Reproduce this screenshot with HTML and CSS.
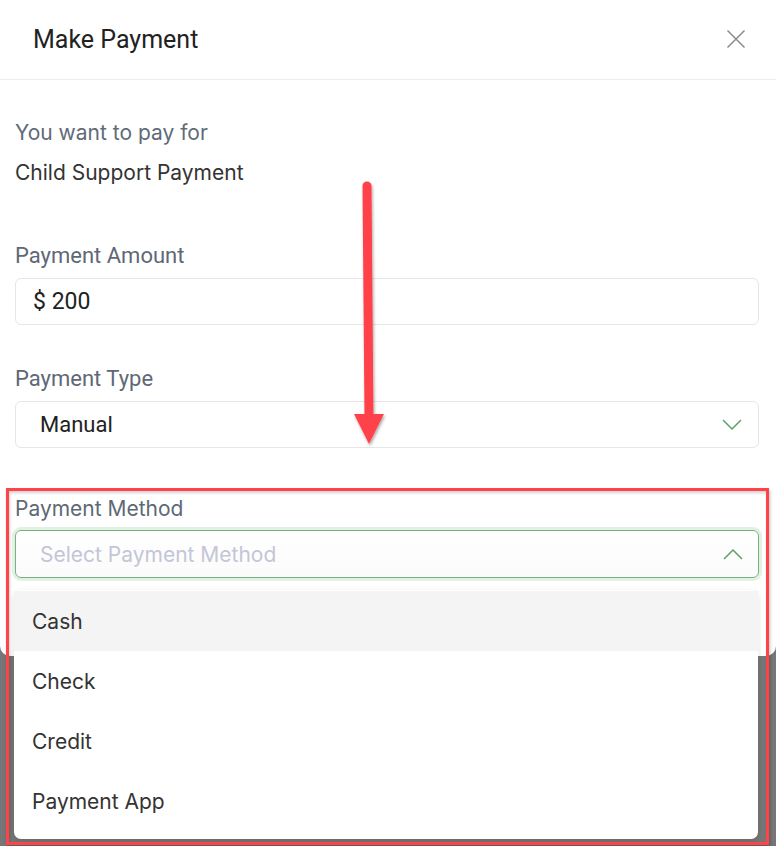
FILE: index.html
```html
<!DOCTYPE html>
<html>
<head>
<meta charset="utf-8">
<link rel="stylesheet" href="styles.css">
</head>
<body>
<div class="modal">
  <div class="modal-header">
    <h1 class="title">Make Payment</h1>
    <svg class="close" width="20" height="20" viewBox="0 0 20 20"><path d="M1.5 1.5 L18.5 18.5 M18.5 1.5 L1.5 18.5" stroke="#8a8a8a" stroke-width="1.5" fill="none"/></svg>
  </div>
  <div class="modal-body">
    <div class="pay-for">
      <div class="muted">You want to pay for</div>
      <div class="value">Child Support Payment</div>
    </div>
    <div class="field">
      <div class="label roboto">Payment Amount</div>
      <div class="input roboto amount">$ 200</div>
    </div>
    <div class="field">
      <div class="label roboto">Payment Type</div>
      <div class="input select roboto">
        <span class="sel-text">Manual</span>
        <svg class="chev" width="20" height="12" viewBox="0 0 20 12"><path d="M1 1 L10 10 L19 1" stroke="#5aa06a" stroke-width="1.5" fill="none"/></svg>
      </div>
    </div>
    <div class="field method">
      <div class="label">Payment Method</div>
      <div class="input select focused">
        <span class="sel-text placeholder">Select Payment Method</span>
        <svg class="chev" width="20" height="12" viewBox="0 0 20 12"><path d="M1 11 L10 2 L19 11" stroke="#5aa06a" stroke-width="1.5" fill="none"/></svg>
      </div>
      <ul class="dropdown">
        <li class="opt active">Cash</li>
        <li class="opt">Check</li>
        <li class="opt">Credit</li>
        <li class="opt">Payment App</li>
      </ul>
    </div>
  </div>
</div>
<div class="highlight"></div>
<svg class="arrow" width="40" height="280" viewBox="0 0 40 280">
  <defs>
    <filter id="sh" x="-50%" y="-10%" width="200%" height="120%">
      <feDropShadow dx="1" dy="2" stdDeviation="1.5" flood-color="#000" flood-opacity="0.35"/>
    </filter>
  </defs>
  <g filter="url(#sh)">
    <path d="M17 6 L19 238" stroke="#ff4348" stroke-width="9" stroke-linecap="round" fill="none"/>
    <path d="M4 234 L34 234 L19 264 Z" fill="#ff4348"/>
  </g>
</svg>
</body>
</html>
```

FILE: styles.css
```css
* { box-sizing: border-box; }
html, body { margin: 0; padding: 0; }
body {
  width: 776px;
  height: 846px;
  overflow: hidden;
  background: #767676;
  font-family: "Inter", "Noto Sans", sans-serif;
  position: relative;
}
.modal {
  background: #fff;
  height: 656px;
  border-radius: 0 0 10px 10px;
  width: 776px;
}
.modal-header {
  height: 80px;
  border-bottom: 1px solid #ececec;
  display: flex;
  align-items: center;
  justify-content: space-between;
  padding: 0 30px 0 33px;
}
.title {
  margin: 0;
  font-family: "Roboto", sans-serif;
  font-weight: 400;
  font-size: 25px;
  color: #222;
}
.close { display: block; margin-top: -2px; }
.modal-body {
  padding: 40px 17px 0 15px;
}
.pay-for { display: flex; flex-direction: column; gap: 14px; }
.muted { font-size: 21px; color: #606b78; line-height: 26px; }
.value { font-size: 21px; color: #333; line-height: 26px; }
.roboto { font-family: "Roboto", sans-serif; }
.field { margin-top: 57px; }
.field + .field { margin-top: 41px; }
.label {
  font-size: 22px;
  color: #5e6876;
  line-height: 26px;
  margin-bottom: 9px;
}
.input {
  height: 47px;
  border: 1px solid #e6e6e6;
  border-radius: 6px;
  display: flex;
  align-items: center;
  padding: 0 16px 0 17px;
  font-size: 22px;
  color: #222;
}
.amount { font-size: 23px; }
.select { justify-content: space-between; padding-left: 24px; padding-right: 16px; }
.chev { display: block; }
.field.method { margin-top: 48px; position: relative; }
.method .label { font-size: 21px; margin-bottom: 8px; }
.focused {
  border-color: #74b27f;
  box-shadow: 0 0 0 3px #e3f0e5;
  background: linear-gradient(#fff, #fbfbfb);
  height: 48px;
  padding-right: 15px;
}
.placeholder { color: #c3c6d6; font-size: 21px; }
.dropdown {
  position: absolute;
  left: -1px;
  top: 94px;
  width: 744px;
  margin: 0;
  padding: 1px 0 8px 0;
  list-style: none;
  background: #fff;
  border-radius: 7px;
  box-shadow: 0 2px 6px rgba(0,0,0,0.12);
}
.opt {
  height: 60px;
  display: flex;
  align-items: center;
  padding-left: 18px;
  font-size: 21px;
  color: #333;
}
.opt.active { background: #f4f4f4; }
.highlight {
  position: absolute;
  left: 6px;
  top: 488px;
  width: 763px;
  height: 357px;
  border: 3px solid #ff4348;
  box-shadow: 1px 2px 3px rgba(0,0,0,0.25), inset 1px 2px 3px rgba(0,0,0,0.18);
}
.arrow {
  position: absolute;
  left: 350px;
  top: 180px;
}
```
